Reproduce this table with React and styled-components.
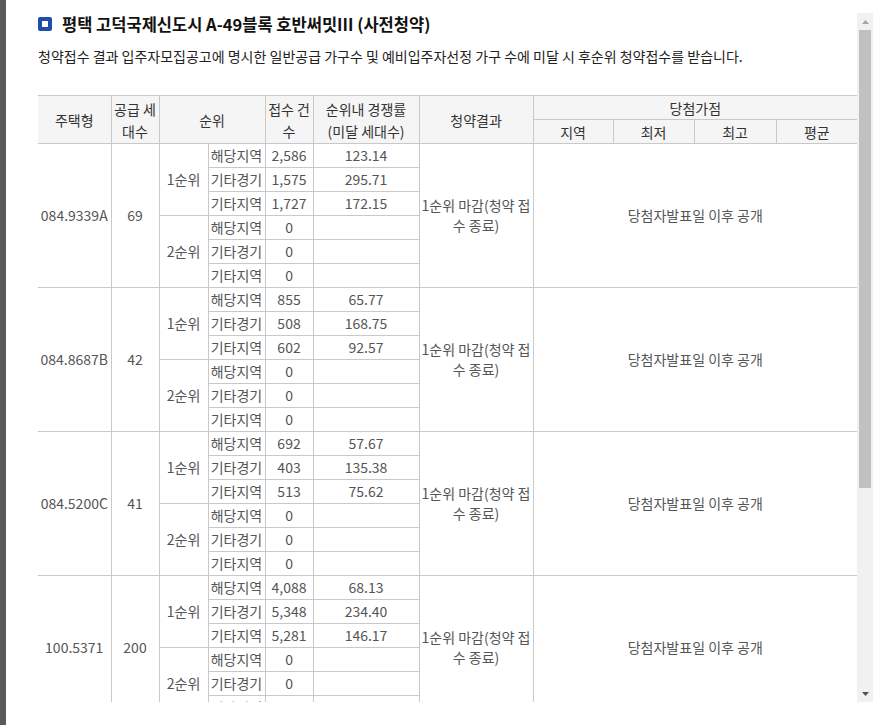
import React from 'react';
import styled, { createGlobalStyle } from 'styled-components';

const GlobalStyle = createGlobalStyle`
  html, body { margin: 0; padding: 0; background: #fff; }
  body { font-family: "Noto Sans CJK KR", "Noto Sans", sans-serif; }
`;

const Page = styled.div`
  display: flex;
  height: 725px;
  background: #fff;
`;

const Backdrop = styled.div`
  flex: none;
  width: 6px;
  background: #5a5a5a;
`;

const Popup = styled.div`
  flex: 1;
  min-width: 0;
  display: flex;
  align-items: flex-start;
  padding: 13px 19px 0 0;
  background: #fff;
`;

const Viewport = styled.div`
  flex: 1;
  min-width: 0;
  height: 689px;
  overflow: hidden;
  padding-left: 32px;
`;

const Scrollbar = styled.div`
  flex: none;
  width: 16px;
  height: 689px;
  background: #f1f1f1;
  display: flex;
  flex-direction: column;
  align-items: center;
`;

const ScrollButton = styled.div`
  flex: none;
  height: 17px;
  width: 16px;
  display: flex;
  align-items: center;
  justify-content: center;
  color: ${(p) => (p.$disabled ? '#a3a3a3' : '#505050')};
`;

const Thumb = styled.div`
  flex: none;
  width: 12px;
  height: 458px;
  background: #c1c1c1;
`;

const TrackRest = styled.div`
  flex: 1;
`;

const TitleRow = styled.h2`
  display: flex;
  align-items: center;
  gap: 10px;
  margin: 0;
  height: 22px;
  font-size: 16.5px;
  font-weight: 700;
  color: #111;
`;

const TitleMark = styled.span`
  flex: none;
  width: 14px;
  height: 14px;
  box-sizing: border-box;
  border: 4px solid #1f4ea6;
  border-radius: 2px;
  background: #fff;
`;

const Notice = styled.p`
  margin: 11px 0 0;
  font-size: 14px;
  line-height: 20px;
  color: #222;
`;

const Table = styled.table`
  margin-top: 29px;
  width: 819px;
  table-layout: fixed;
  border-collapse: collapse;
  border-left: hidden;
  border-right: hidden;
  font-size: 14px;
  color: #555;
`;

const Th = styled.th`
  box-sizing: border-box;
  height: 24px;
  padding: 0 1px;
  background: #f5f5f5;
  border: 1px solid #c9c9c9;
  font-weight: 400;
  color: #333;
  line-height: 22px;
  text-align: center;
  white-space: nowrap;
`;

const Td = styled.td`
  box-sizing: border-box;
  height: 24px;
  padding: 0 1px 1px;
  border: 1px solid #c9c9c9;
  line-height: 20px;
  text-align: center;
  vertical-align: middle;
  white-space: nowrap;
`;

const widths = [73, 48, 49, 57, 48, 106, 114, 80, 81, 82, 81];

const groups = [
  { type: '084.9339A', supply: '69', first: [['2,586', '123.14'], ['1,575', '295.71'], ['1,727', '172.15']] },
  { type: '084.8687B', supply: '42', first: [['855', '65.77'], ['508', '168.75'], ['602', '92.57']] },
  { type: '084.5200C', supply: '41', first: [['692', '57.67'], ['403', '135.38'], ['513', '75.62']] },
  { type: '100.5371', supply: '200', first: [['4,088', '68.13'], ['5,348', '234.40'], ['5,281', '146.17']] },
];

const regions = ['해당지역', '기타경기', '기타지역'];

function Group({ g }) {
  const rows = [];
  for (let i = 0; i < 6; i++) {
    const rank = i < 3 ? 0 : 1;
    const r = i % 3;
    const data = rank === 0 ? g.first[r] : ['0', ''];
    rows.push(
      <tr key={i}>
        {i === 0 && <Td rowSpan={6}>{g.type}</Td>}
        {i === 0 && <Td rowSpan={6}>{g.supply}</Td>}
        {r === 0 && <Td rowSpan={3}>{rank === 0 ? '1순위' : '2순위'}</Td>}
        <Td>{regions[r]}</Td>
        <Td>{data[0]}</Td>
        <Td>{data[1]}</Td>
        {i === 0 && (
          <Td rowSpan={6}>
            1순위 마감(청약 접<br />수 종료)
          </Td>
        )}
        {i === 0 && (
          <Td rowSpan={6} colSpan={4}>
            당첨자발표일 이후 공개
          </Td>
        )}
      </tr>
    );
  }
  return <>{rows}</>;
}

function Arrow({ up }) {
  return (
    <svg width="7" height="4" viewBox="0 0 7 4" aria-hidden="true">
      <polygon points={up ? '0,4 7,4 3.5,0' : '0,0 7,0 3.5,4'} fill="currentColor" />
    </svg>
  );
}

export default function App() {
  return (
    <>
      <GlobalStyle />
      <Page>
        <Backdrop />
        <Popup>
          <Viewport>
            <TitleRow>
              <TitleMark />
              평택 고덕국제신도시 A-49블록 호반써밋III (사전청약)
            </TitleRow>
            <Notice>
              청약접수 결과 입주자모집공고에 명시한 일반공급 가구수 및 예비입주자선정 가구 수에 미달 시 후순위 청약접수를 받습니다.
            </Notice>
            <Table>
              <colgroup>
                {widths.map((w, i) => (
                  <col key={i} style={{ width: w }} />
                ))}
              </colgroup>
              <thead>
                <tr>
                  <Th rowSpan={2}>주택형</Th>
                  <Th rowSpan={2}>
                    공급 세<br />대수
                  </Th>
                  <Th rowSpan={2} colSpan={2}>순위</Th>
                  <Th rowSpan={2}>
                    접수 건<br />수
                  </Th>
                  <Th rowSpan={2}>
                    순위내 경쟁률<br />(미달 세대수)
                  </Th>
                  <Th rowSpan={2}>청약결과</Th>
                  <Th colSpan={4}>당첨가점</Th>
                </tr>
                <tr>
                  <Th>지역</Th>
                  <Th>최저</Th>
                  <Th>최고</Th>
                  <Th>평균</Th>
                </tr>
              </thead>
              <tbody>
                {groups.map((g) => (
                  <Group key={g.type} g={g} />
                ))}
              </tbody>
            </Table>
          </Viewport>
          <Scrollbar>
            <ScrollButton $disabled>
              <Arrow up />
            </ScrollButton>
            <Thumb />
            <TrackRest />
            <ScrollButton>
              <Arrow />
            </ScrollButton>
          </Scrollbar>
        </Popup>
      </Page>
    </>
  );
}
